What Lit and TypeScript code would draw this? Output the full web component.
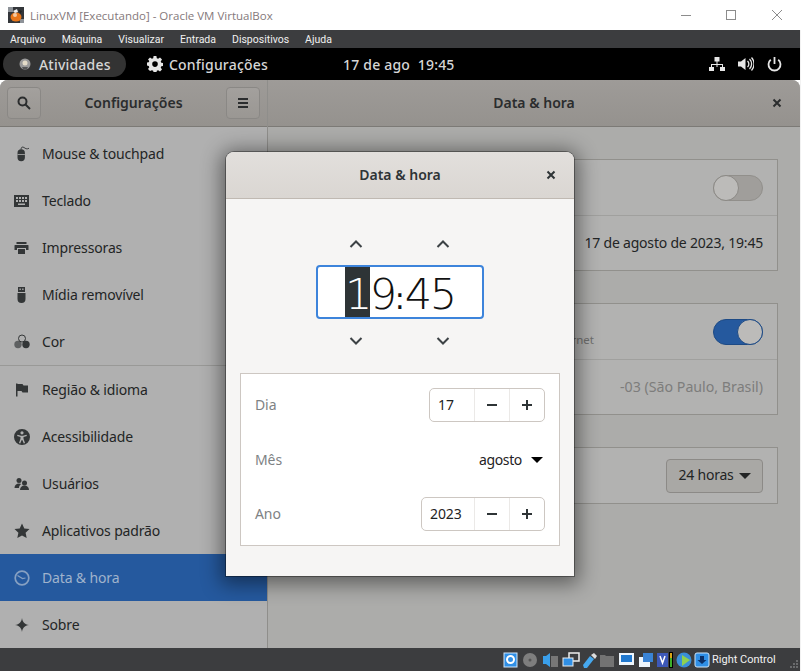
import { LitElement, html, css, svg } from "lit";
import { customElement } from "lit/decorators.js";

const icons: Record<string, unknown> = {
  mouse: svg`<path d="M3.500 7a3.700 3.700 0 0 1 7.400 0v4.500a3.700 3.700 0 0 1-7.400 0z"/><path d="M7 3.500C7 1 8.500.5 10 1.500s2.500 2 5 .8" fill="none" stroke="currentColor" stroke-width=".9"/><path d="M3.500 8.500h7.400" stroke="#b0b0b0" stroke-width=".8"/>`,
  keyboard: svg`<path fill-rule="evenodd" d="M0 2h15v12H0z M2 4v2h2V4z M5 4v2h2V4z M8 4v2h2V4z M11 4v2h2V4z M2 7v2h2V7z M5 7v2h2V7z M8 7v2h2V7z M11 7v2h2V7z M4 10.500v1.500h7v-1.500z"/>`,
  printer: svg`<path d="M2.500 2h10v2h-10z M1 5h13a.5.5 0 0 1 .5.500V10H12V8H3v2H.5V5.500A.5.5 0 0 1 1 5z M4 9h7v5H4z"/>`,
  usb: svg`<path fill-rule="evenodd" d="M4 0h7v5H4z M5.500 1.500V3h1.300V1.500z M8.200 1.500V3h1.300V1.500z M3.500 6h8v6a4 4 0 0 1-8 0z"/>`,
  color: svg`<circle cx="8" cy="4.500" r="3.500" fill="none" stroke="currentColor" stroke-width="1"/><circle cx="4" cy="10.500" r="3.700" opacity=".65"/><circle cx="12" cy="10.500" r="3.700"/>`,
  flag: svg`<path d="M2 1.500h1.500v13H2z M3.500 2h5l1 1.500H14v7H8.500l-1-1.500h-4z"/>`,
  access: svg`<path fill-rule="evenodd" d="M8 0a8 8 0 1 1 0 16A8 8 0 0 1 8 0z M8 2.200a1.600 1.600 0 1 0 0 3.200 1.600 1.600 0 0 0 0-3.200z M3.500 5.800l-.4 1.200 3.400 1.100v1.700L5 14l1.200.4L7.700 11h.6l1.500 3.400L11 14l-1.500-4.200V8.100L12.900 7l-.4-1.200L9 6.700H7z"/>`,
  users: svg`<circle cx="5" cy="4.500" r="2.500"/><path d="M.5 12c0-3 2-4.500 4.500-4.500 1 0 1.700.2 2.300.6C5.800 9 5 10.300 5 12z"/><circle cx="10.500" cy="7" r="2.500"/><path d="M6 14c0-3 2-4.500 4.500-4.500S15 11 15 14z"/>`,
  star: svg`<path d="M8 .5l2.300 5 5.200.6-3.900 3.600 1.100 5.400L8 12.400l-4.700 2.700 1.100-5.400L.5 6.100l5.200-.6z"/>`,
  clock: svg`<circle cx="8" cy="8" r="6.800" fill="none" stroke="currentColor" stroke-width="1.700"/><path d="M3.500 5.500L8.500 8.500l3-.5" fill="none" stroke="currentColor" stroke-width="1.200"/>`,
  sparkle: svg`<path d="M8 1c.6 4 2.500 6.300 7 7-4.500.7-6.400 3-7 7-.6-4-2.500-6.300-7-7 4.500-.7 6.400-3 7-7z"/>`,
};

const menuItems = ["Arquivo", "Máquina", "Visualizar", "Entrada", "Dispositivos", "Ajuda"];
const firstGroup = [
  ["mouse", "Mouse & touchpad"],
  ["keyboard", "Teclado"],
  ["printer", "Impressoras"],
  ["usb", "Mídia removível"],
  ["color", "Cor"],
];
const secondGroup = [
  ["flag", "Região & idioma"],
  ["access", "Acessibilidade"],
  ["users", "Usuários"],
  ["star", "Aplicativos padrão"],
  ["clock", "Data & hora"],
  ["sparkle", "Sobre"],
];

const closeIcon = html`<svg class="close" viewBox="0 0 10 10" width="10" height="10">
  <path d="M1.500 1.500l7 7M8.500 1.500l-7 7" fill="none" stroke="currentColor" stroke-width="2" />
</svg>`;

const chevron = (up: boolean) => html`<svg viewBox="0 0 14 8" width="14" height="8">
  <path d=${up ? "M1.500 7L7 1.500 12.500 7" : "M1.500 1L7 6.500 12.500 1"} fill="none" stroke="#3d4245" stroke-width="2" />
</svg>`;

const minusIcon = html`<svg viewBox="0 0 12 12" width="12" height="12"><path d="M1 6h10" stroke="#2e3436" stroke-width="2" /></svg>`;
const plusIcon = html`<svg viewBox="0 0 12 12" width="12" height="12"><path d="M1 6h10M6 1v10" stroke="#2e3436" stroke-width="2" /></svg>`;

@customElement("app-root")
export class AppRoot extends LitElement {
  static styles = css`
    :host {
      display: block;
      position: relative;
      width: 801px;
      height: 671px;
      overflow: hidden;
      background: #fff;
      font-family: "Noto Sans", sans-serif;
    }

    .titlebar {
      height: 30px;
      display: flex;
      align-items: center;
      background: #fff;
      padding-left: 8px;
      color: #85797b;
      font-family: "Open Sans", sans-serif;
      font-size: 11.500px;
    }
    .titlebar .name {
      margin-left: 6px;
      flex: 1;
    }
    .winbtns {
      display: flex;
      align-items: center;
      gap: 35px;
      padding-right: 19px;
    }
    .winbtns svg:nth-child(2) {
      margin-right: 1px;
    }

    .vm {
      border-right: 1px solid #f2f2f2;
      height: 641px;
      display: flex;
      flex-direction: column;
    }

    .menubar {
      height: 18px;
      background: #3c3d3f;
      display: flex;
      align-items: center;
      gap: 16px;
      padding-left: 10px;
      color: #f0f0f0;
      font-family: Roboto, sans-serif;
      font-size: 10.500px;
    }

    .topbar {
      height: 32px;
      background: #000;
      display: flex;
      align-items: center;
      color: #d6d6d6;
      font-size: 14px;
      font-weight: 500;
      letter-spacing: 0.2px;
      position: relative;
    }
    .activities {
      margin-left: 3px;
      width: 123px;
      height: 26px;
      box-sizing: border-box;
      border-radius: 13px;
      background: #333;
      display: flex;
      align-items: center;
      padding-left: 16px;
      gap: 8px;
    }
    .appname {
      margin-left: 21px;
      display: flex;
      align-items: center;
      gap: 6px;
      width: 196px;
    }
    .clock {
      width: 114px;
      white-space: pre;
    }
    .tray {
      margin-left: auto;
      display: flex;
      align-items: center;
      gap: 13px;
      padding-right: 18px;
    }

    .window {
      flex: 1;
      min-height: 0;
      display: flex;
      border-radius: 8px 8px 0 0;
      overflow: hidden;
      background: #acacaa;
    }

    .sidebar {
      width: 267px;
      flex: none;
      display: flex;
      flex-direction: column;
      background: #b0b0b0;
      border-right: 1px solid #8f8e8b;
    }
    .header {
      height: 47px;
      flex: none;
      display: flex;
      align-items: center;
      box-sizing: border-box;
      background: linear-gradient(#9e9b98, #95928e);
      border-bottom: 1px solid #7c7a76;
      color: #2b2d2e;
      font-size: 14px;
      font-weight: 600;
    }
    .header > span,
    .dheader > span {
      padding-bottom: 2px;
    }
    .sidebar .header {
      padding: 0 7px;
      justify-content: space-between;
    }
    .toolbtn {
      width: 34px;
      height: 32px;
      display: grid;
      place-items: center;
      box-sizing: border-box;
      border: 1px solid #8a8885;
      border-radius: 4px;
      background: linear-gradient(#a3a09d, #9a9793);
    }
    .list {
      padding-top: 3px;
    }
    .row {
      height: 47px;
      display: flex;
      align-items: center;
      gap: 12px;
      padding-left: 14px;
      color: #232525;
      font-size: 14px;
      letter-spacing: -0.15px;
    }
    .row svg {
      flex: none;
      color: #333637;
    }
    .row.selected {
      background: #25599e;
      color: #a0b3cc;
    }
    .row.selected svg {
      color: #86a0c2;
    }
    .divider {
      height: 1px;
      background: #999997;
    }

    .panel {
      flex: 1;
      display: flex;
      flex-direction: column;
      min-width: 0;
    }
    .panel .header {
      justify-content: center;
      position: relative;
    }
    .panel .close {
      position: absolute;
      right: 18px;
      top: 18px;
    }
    .content {
      padding: 32px 22px 0 23px;
      display: flex;
      flex-direction: column;
      gap: 32px;
    }
    .frame {
      border: 1px solid #91908c;
      background: #b2b2b1;
    }
    .frow {
      height: 55px;
      box-sizing: border-box;
      display: flex;
      align-items: center;
      justify-content: flex-end;
      padding: 0 14px;
      color: #232525;
      font-size: 14px;
      letter-spacing: -0.2px;
      position: relative;
    }
    .frow + .frow {
      border-top: 1px solid #a0a09e;
    }
    .frow.dim {
      color: #7d7d7c;
      font-size: 14.200px;
      letter-spacing: 0;
    }
    .frow .text {
      padding-bottom: 2px;
    }
    .subtitle {
      position: absolute;
      right: 183px;
      top: 28px;
      font-size: 11.500px;
      letter-spacing: 0;
      color: #6f6f6e;
      white-space: nowrap;
    }
    .switch {
      width: 50px;
      height: 26px;
      box-sizing: border-box;
      border-radius: 13px;
      background: #a09e9b;
      border: 1px solid #918f8b;
      display: flex;
    }
    .switch .knob {
      width: 26px;
      height: 26px;
      margin: -1px;
      border-radius: 50%;
      box-sizing: border-box;
      background: #bcbbb9;
      border: 1px solid #8b8985;
    }
    .switch.on {
      background: #25599e;
      border-color: #1d4a85;
      justify-content: flex-end;
    }
    .switch.on .knob {
      border-color: #1d4a85;
    }
    .combo {
      width: 97px;
      height: 34px;
      box-sizing: border-box;
      border: 1px solid #8c8a87;
      border-radius: 4px;
      background: #a9a8a5;
      display: flex;
      align-items: center;
      justify-content: center;
      gap: 5px;
    }
    .combo span:first-child {
      padding-bottom: 2px;
    }
    .tri {
      width: 0;
      height: 0;
      border-left: 6px solid transparent;
      border-right: 6px solid transparent;
      border-top: 6px solid currentColor;
    }

    .dialog {
      position: absolute;
      left: 226px;
      top: 152px;
      width: 348px;
      height: 424px;
      box-sizing: border-box;
      display: flex;
      flex-direction: column;
      background: #f6f5f4;
      border-radius: 8px 8px 0 0;
      box-shadow: 0 0 0 1px rgba(0, 0, 0, 0.35), 0 3px 20px 5px rgba(0, 0, 0, 0.45);
      color: #2e3436;
    }
    .dheader {
      height: 47px;
      flex: none;
      box-sizing: border-box;
      position: relative;
      display: flex;
      align-items: center;
      justify-content: center;
      background: linear-gradient(#e2dfdc, #dad6d2);
      border-bottom: 1px solid #c0b9b2;
      border-radius: 8px 8px 0 0;
      font-size: 14px;
      font-weight: 600;
    }
    .dheader .close {
      position: absolute;
      right: 18px;
      top: 18px;
    }
    .time {
      margin-top: 41px;
      display: flex;
      flex-direction: column;
      align-items: center;
    }
    .arrows {
      display: flex;
      gap: 73px;
      height: 8px;
      padding-right: 2px;
    }
    .timebox {
      margin: 17px 0 18px;
      width: 168px;
      height: 54px;
      box-sizing: border-box;
      border: 2px solid #3d84db;
      border-radius: 4px;
      background: #fff;
      padding-left: 27px;
      color: #111;
      font-family: "DejaVu Sans", sans-serif;
      font-weight: 200;
      font-size: 43px;
      letter-spacing: -2.500px;
      line-height: 54px;
      white-space: pre;
    }
    .timebox .sel {
      display: inline-block;
      height: 50px;
      background: #2e3436;
      color: #fff;
    }
    .timebox .colon {
      font-size: 30px;
      font-weight: 400;
      letter-spacing: 0;
    }
    .fields {
      margin: 28px 14px 0;
      padding: 14px;
      box-sizing: border-box;
      height: 173px;
      border: 1px solid #cdc7c2;
      background: #fff;
      display: grid;
      grid-template-columns: 1fr auto;
      grid-template-rows: 34px 35px 34px;
      row-gap: 20px;
      align-items: center;
      font-size: 14px;
      letter-spacing: -0.1px;
    }
    .fields label {
      color: #7e8284;
      padding-bottom: 2px;
    }
    .fields label.mid {
      padding-bottom: 0;
    }
    .spin {
      justify-self: end;
      height: 34px;
      box-sizing: border-box;
      border: 1px solid #cdc7c2;
      border-radius: 5px;
      display: flex;
      align-items: stretch;
      color: #1f2324;
    }
    .spin .val {
      display: flex;
      align-items: center;
      box-sizing: border-box;
      padding: 0 0 2px 8px;
    }
    .spin .btn {
      width: 35px;
      box-sizing: border-box;
      display: grid;
      place-items: center;
      border-left: 1px solid #ebe9e7;
    }
    .month {
      justify-self: end;
      display: flex;
      align-items: center;
      gap: 9px;
      padding-right: 2px;
      color: #1f2324;
      letter-spacing: -0.35px;
    }
    .month .tri {
      color: #000;
    }

    .statusbar {
      height: 23px;
      flex: none;
      background: #3c3d3f;
      display: flex;
      align-items: center;
      color: #f2f2f2;
      font-family: Roboto, sans-serif;
      font-size: 11px;
      position: relative;
    }
    .statusbar .hosticons {
      margin-left: 503px;
      display: flex;
      align-items: center;
      height: 16px;
    }
    .statusbar .key {
      margin-left: 2px;
    }
    .grip {
      position: absolute;
      right: 1px;
      bottom: 2px;
    }
  `;

  private renderRow(icon: string, label: string) {
    return html`<div class="row ${label === "Data & hora" ? "selected" : ""}">
      <svg viewBox="0 0 16 16" width="16" height="16" fill="currentColor">${icons[icon]}</svg>
      <span>${label}</span>
    </div>`;
  }

  private renderTitlebar() {
    return html`<div class="titlebar">
      <svg width="16" height="16" viewBox="0 0 16 16">
        <rect width="16" height="16" fill="#33363a" />
        <rect x="0" y="0" width="5" height="5" fill="#8d9298" />
        <rect x="12" y="12" width="4" height="4" fill="#8d9298" />
        <ellipse cx="8" cy="10" rx="5.500" ry="4.500" fill="#e8761a" />
        <circle cx="7" cy="8" r="2" fill="#f5c9a0" />
        <path d="M5 4l4-2 1 3-3 1z" fill="#eee" />
        <path d="M11 3l3 1-2 3z" fill="#222" />
      </svg>
      <span class="name">LinuxVM [Executando] - Oracle VM VirtualBox</span>
      <div class="winbtns">
        <svg width="10" height="10" viewBox="0 0 10 10"><path d="M0 5.500h10" stroke="#8c8c8c" /></svg>
        <svg width="10" height="10" viewBox="0 0 10 10"><rect x=".5" y=".5" width="9" height="9" fill="none" stroke="#8c8c8c" /></svg>
        <svg width="10" height="10" viewBox="0 0 10 10"><path d="M0 0l10 10M10 0L0 10" stroke="#8c8c8c" /></svg>
      </div>
    </div>`;
  }

  private renderTopbar() {
    return html`<div class="topbar">
      <div class="activities">
        <svg width="12" height="12" viewBox="0 0 12 12">
          <circle cx="6" cy="6" r="5.500" fill="#9a9a9a" />
          <circle cx="6" cy="5" r="2.500" fill="#e4dcc8" />
          <path d="M3 9h6l-1 2H4z" fill="#555" />
        </svg>
        <span>Atividades</span>
      </div>
      <div class="appname">
        <svg width="16" height="16" viewBox="0 0 16 16" fill="#e6e6e6">
          <path fill-rule="evenodd" d="M6.600 0h2.800l.4 2.200 1.300.6L13 1.500l2 2-1.300 1.900.6 1.300 2.200.4v2.800l-2.200.4-.6 1.300 1.300 1.900-2 2-1.900-1.300-1.300.6-.4 2.200H6.600l-.4-2.200-1.300-.6L3 15.100l-2-2 1.300-1.900-.6-1.300L-.5 9.500V6.700l2.200-.4.6-1.300L1 3.500l2-2 1.900 1.300 1.300-.6z M8 5.300a2.800 2.800 0 1 0 0 5.600 2.800 2.800 0 0 0 0-5.600z" />
        </svg>
        <span>Configurações</span>
      </div>
      <div class="clock">17 de ago  19:45</div>
      <div class="tray">
        <svg width="16" height="16" viewBox="0 0 16 16" fill="#e6e6e6">
          <path d="M5.500 1h5v4.500h-5z M7.500 5.500h1V8h5.500v3H13V9H8.500v2h-1V9H3v2H2V8h5.500z M0 11h5v4H0z M11 11h5v4h-5z" />
        </svg>
        <svg width="16" height="16" viewBox="0 0 16 16" fill="#e6e6e6">
          <path d="M0 5.500h3L7.500 2v12L3 10.500H0z" />
          <path d="M9.500 5a4 4 0 0 1 0 6M11.500 3a7 7 0 0 1 0 10M13.500 1.500a9.500 9.500 0 0 1 0 13" fill="none" stroke="#e6e6e6" stroke-width="1.300" />
        </svg>
        <svg width="15" height="16" viewBox="0 0 15 16" fill="none" stroke="#e6e6e6" stroke-width="1.800">
          <path d="M7.500 1v7" />
          <path d="M3.800 3.800a6 6 0 1 0 7.400 0" />
        </svg>
      </div>
    </div>`;
  }

  private renderSidebar() {
    return html`<div class="sidebar">
      <div class="header">
        <div class="toolbtn">
          <svg width="14" height="14" viewBox="0 0 14 14" fill="none" stroke="#2b2d2e" stroke-width="2">
            <circle cx="5.500" cy="5.500" r="4" />
            <path d="M8.500 8.500L13 13" />
          </svg>
        </div>
        <span>Configurações</span>
        <div class="toolbtn">
          <svg width="12" height="12" viewBox="0 0 12 12"><path d="M1 2h10M1 6h10M1 10h10" stroke="#2b2d2e" stroke-width="2" /></svg>
        </div>
      </div>
      <div class="list">
        ${firstGroup.map(([i, l]) => this.renderRow(i, l))}
        <div class="divider"></div>
        ${secondGroup.map(([i, l]) => this.renderRow(i, l))}
      </div>
    </div>`;
  }

  private renderPanel() {
    return html`<div class="panel">
      <div class="header">
        <span>Data & hora</span>
        ${closeIcon}
      </div>
      <div class="content">
        <div class="frame">
          <div class="frow"><div class="switch"><div class="knob"></div></div></div>
          <div class="frow"><span class="text">17 de agosto de 2023, 19:45</span></div>
        </div>
        <div class="frame">
          <div class="frow">
            <span class="subtitle">Requer acesso à Internet</span>
            <div class="switch on"><div class="knob"></div></div>
          </div>
          <div class="frow dim"><span class="text">-03 (São Paulo, Brasil)</span></div>
        </div>
        <div class="frame">
          <div class="frow">
            <div class="combo"><span>24 horas</span><span class="tri"></span></div>
          </div>
        </div>
      </div>
    </div>`;
  }

  private renderDialog() {
    return html`<div class="dialog">
      <div class="dheader">
        <span>Data & hora</span>
        ${closeIcon}
      </div>
      <div class="time">
        <div class="arrows">${chevron(true)}${chevron(true)}</div>
        <div class="timebox"><span class="sel">1</span><span>9</span><span class="colon">:</span><span>45</span></div>
        <div class="arrows">${chevron(false)}${chevron(false)}</div>
      </div>
      <div class="fields">
        <label>Dia</label>
        <div class="spin">
          <div class="val" style="width:44px">17</div>
          <div class="btn">${minusIcon}</div>
          <div class="btn">${plusIcon}</div>
        </div>
        <label class="mid">Mês</label>
        <div class="month"><span>agosto</span><span class="tri"></span></div>
        <label>Ano</label>
        <div class="spin">
          <div class="val" style="width:52px">2023</div>
          <div class="btn">${minusIcon}</div>
          <div class="btn">${plusIcon}</div>
        </div>
      </div>
    </div>`;
  }

  private renderStatusbar() {
    return html`<div class="statusbar">
      <svg class="hosticons" width="207" height="16" viewBox="0 0 207 16">
        <rect x="1" y="1" width="13" height="14" fill="#2f8fe6" stroke="#cfe6fa" />
        <circle cx="7.500" cy="7.500" r="3.500" fill="none" stroke="#fff" stroke-width="2" />
        <circle cx="27" cy="8" r="7" fill="#7e7e7e" /><circle cx="27" cy="8" r="1.500" fill="#555" />
        <path d="M40 4h3l4-3v14l-4-3h-3z" fill="#3a9fea" /><rect x="48" y="4" width="7" height="11" fill="#777" />
        <rect x="66" y="1" width="10" height="8" fill="none" stroke="#eee" stroke-width="1.500" />
        <rect x="60" y="6" width="10" height="8" fill="#2f8fe6" stroke="#eee" />
        <path d="M80 13l7-9 4 3-7 9h-3z" fill="#46a8ee" /><path d="M88 3l3-2 3 3-2 3z" fill="#ddd" />
        <path d="M97 3h5l1 1h8v11H97z" fill="#737373" />
        <rect x="116" y="1" width="15" height="12" fill="#eef6fd" /><rect x="118" y="3" width="11" height="7" fill="#1f78cf" />
        <rect x="136" y="5" width="11" height="10" fill="#eef6fd" /><rect x="140" y="1" width="10" height="9" fill="#3a84d6" />
        <rect x="154" y="1" width="11" height="14" fill="#3d58b8" /><path d="M157 4l2.500 7L162 4" fill="none" stroke="#fff" stroke-width="1.500" />
        <rect x="166" y="0" width="4" height="16" fill="#000" /><rect x="167" y="1" width="2" height="5" fill="#d9a417" /><rect x="167" y="6" width="2" height="9" fill="#3caf2b" />
        <circle cx="181" cy="8" r="7.500" fill="#3a8fd8" /><path d="M179 3l8 5-8 6z" fill="#8fd14f" />
        <rect x="192" y="1" width="14" height="14" rx="2" fill="#2f8fe6" stroke="#cfe6fa" /><path d="M197 4h4v4h2.500L199 12l-4.500-4H197z" fill="#0b2f66" />
      </svg>
      <span class="key">Right Control</span>
      <svg class="grip" width="9" height="9" viewBox="0 0 9 9" fill="#6a6b6d">
        <rect x="6" y="0" width="2" height="2" /><rect x="3" y="3" width="2" height="2" /><rect x="6" y="3" width="2" height="2" />
        <rect x="0" y="6" width="2" height="2" /><rect x="3" y="6" width="2" height="2" /><rect x="6" y="6" width="2" height="2" />
      </svg>
    </div>`;
  }

  render() {
    return html`
      ${this.renderTitlebar()}
      <div class="vm">
        <div class="menubar">${menuItems.map((m) => html`<span>${m}</span>`)}</div>
        ${this.renderTopbar()}
        <div class="window">${this.renderSidebar()}${this.renderPanel()}</div>
        ${this.renderStatusbar()}
      </div>
      ${this.renderDialog()}
    `;
  }
}
